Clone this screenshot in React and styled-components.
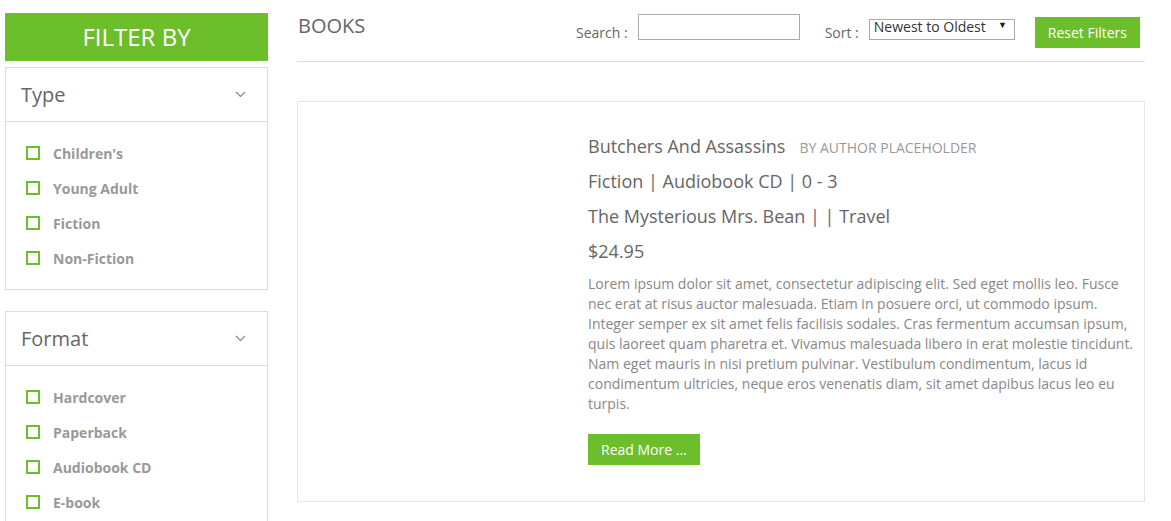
import React from 'react';
import styled, { createGlobalStyle } from 'styled-components';

const GREEN = '#6dbe2b';

const GlobalStyle = createGlobalStyle`
  body {
    margin: 0;
    background: #fff;
    font-family: "Open Sans", "Liberation Sans", sans-serif;
    color: #666;
  }
  * { box-sizing: border-box; }
`;

const Page = styled.div`
  display: flex;
  align-items: flex-start;
  gap: 29px;
  padding: 0 26px 0 5px;
`;

const Sidebar = styled.aside`
  width: 263px;
  flex-shrink: 0;
  display: flex;
  flex-direction: column;
  padding-top: 13px;
`;

const FilterTitle = styled.div`
  height: 48px;
  background: ${GREEN};
  color: #fff;
  font-size: 24px;
  line-height: 48px;
  text-align: center;
  margin-bottom: 6px;
`;

const Panel = styled.section`
  border: 1px solid #ddd;
  margin-bottom: 21px;
`;

const PanelHeader = styled.div`
  height: 54px;
  display: flex;
  align-items: center;
  justify-content: space-between;
  padding: 0 21px 0 15px;
  border-bottom: 1px solid #ddd;
  font-size: 20px;
  color: #666;
`;

const PanelBody = styled.ul`
  list-style: none;
  margin: 0;
  padding: 21px 20px;
  display: flex;
  flex-direction: column;
  gap: 15px;
`;

const Option = styled.li`
  display: flex;
  align-items: center;
  gap: 13px;
  height: 20px;
  font-size: 14px;
  font-weight: 700;
  color: #999;
`;

const Box = styled.span`
  width: 14px;
  height: 14px;
  border: 2px solid ${GREEN};
  flex-shrink: 0;
`;

const Main = styled.main`
  flex: 1;
  min-width: 0;
`;

const Header = styled.header`
  height: 62px;
  border-bottom: 1px solid #ddd;
  display: flex;
  align-items: flex-start;
  padding-left: 1px;
  padding-right: 5px;
`;

const PageTitle = styled.h1`
  margin: 12px 0 0 0;
  font-size: 20px;
  line-height: 28px;
  font-weight: 400;
  color: #666;
`;

const Tools = styled.div`
  margin-left: auto;
  display: flex;
  align-items: flex-start;
`;

const Label = styled.label`
  font-size: 14px;
  line-height: 20px;
  margin-top: 23px;
  color: #666;
  margin-left: ${p => p.$ml || 0}px;
  margin-right: ${p => p.$mr || 0}px;
`;

const SearchInput = styled.input`
  margin-top: 14px;
  width: 162px;
  height: 26px;
  border: 1px solid #aaa;
  padding: 2px 6px;
  font-family: inherit;
  font-size: 14px;
`;

const SelectWrap = styled.div`
  position: relative;
  margin-top: 15px;
`;

const Select = styled.select`
  appearance: none;
  width: 146px;
  height: 21px;
  border: 1px solid #aaa;
  border-radius: 0;
  background: #fff;
  padding: 0 0 5px 4px;
  font-family: inherit;
  font-size: 14px;
  line-height: 14px;
  color: #333;
`;

const Caret = styled.span`
  position: absolute;
  right: 8px;
  top: 3px;
  font-size: 9px;
  color: #222;
  pointer-events: none;
`;

const GreenButton = styled.button`
  border: none;
  background: ${GREEN};
  color: #fff;
  font-family: inherit;
  font-size: 14px;
  height: 31px;
  padding: 0 ${p => p.$px || 13}px;
  margin-top: ${p => p.$mt || 0}px;
  margin-left: ${p => p.$ml || 0}px;
  cursor: pointer;
`;

const Card = styled.article`
  margin-top: 39px;
  border: 1px solid #e6e6e6;
  display: grid;
  grid-template-columns: 250px 1fr;
  gap: 20px;
  padding: 32px 3px 35px 20px;
  min-height: 401px;
`;

const Cover = styled.div``;

const Info = styled.div`
  display: flex;
  flex-direction: column;
  align-items: flex-start;
`;

const Line = styled.div`
  font-size: 18px;
  line-height: 25px;
  height: 25px;
  color: #666;
  margin-bottom: 10px;
`;

const Author = styled.span`
  font-size: 14px;
  line-height: 1;
  color: #999;
  text-transform: uppercase;
  margin-left: 14px;
`;

const Body = styled.p`
  margin: 0 0 20px 0;
  font-size: 14px;
  line-height: 20px;
  color: #888;
`;

const Chevron = () => (
  <svg width="11" height="7" viewBox="0 0 11 7" fill="none">
    <path d="M1 1l4.5 4.5L10 1" stroke="#888" strokeWidth="1.2" />
  </svg>
);

const filters = [
  { title: 'Type', items: ["Children's", 'Young Adult', 'Fiction', 'Non-Fiction'] },
  { title: 'Format', items: ['Hardcover', 'Paperback', 'Audiobook CD', 'E-book'] },
];

export default function App() {
  return (
    <>
      <GlobalStyle />
      <Page>
        <Sidebar>
          <FilterTitle>FILTER BY</FilterTitle>
          {filters.map(f => (
            <Panel key={f.title}>
              <PanelHeader>
                {f.title}
                <Chevron />
              </PanelHeader>
              <PanelBody>
                {f.items.map(item => (
                  <Option key={item}>
                    <Box />
                    {item}
                  </Option>
                ))}
              </PanelBody>
            </Panel>
          ))}
        </Sidebar>
        <Main>
          <Header>
            <PageTitle>BOOKS</PageTitle>
            <Tools>
              <Label $mr={10}>Search :</Label>
              <SearchInput type="text" />
              <Label $ml={25} $mr={10}>Sort :</Label>
              <SelectWrap>
                <Select defaultValue="new">
                  <option value="new">Newest to Oldest</option>
                  <option value="old">Oldest to Newest</option>
                </Select>
                <Caret>▼</Caret>
              </SelectWrap>
              <GreenButton $mt={17} $ml={20}>Reset Filters</GreenButton>
            </Tools>
          </Header>
          <Card>
            <Cover />
            <Info>
              <Line>
                Butchers And Assassins
                <Author>by Author Placeholder</Author>
              </Line>
              <Line>Fiction | Audiobook CD | 0 - 3</Line>
              <Line>The Mysterious Mrs. Bean | | Travel</Line>
              <Line>$24.95</Line>
              <Body>
                Lorem ipsum dolor sit amet, consectetur adipiscing elit. Sed eget mollis leo. Fusce
                nec erat at risus auctor malesuada. Etiam in posuere orci, ut commodo ipsum.
                Integer semper ex sit amet felis facilisis sodales. Cras fermentum accumsan ipsum,
                quis laoreet quam pharetra et. Vivamus malesuada libero in erat molestie tincidunt.
                Nam eget mauris in nisi pretium pulvinar. Vestibulum condimentum, lacus id
                condimentum ultricies, neque eros venenatis diam, sit amet dapibus lacus leo eu
                turpis.
              </Body>
              <GreenButton $px={13}>Read More ...</GreenButton>
            </Info>
          </Card>
        </Main>
      </Page>
    </>
  );
}
